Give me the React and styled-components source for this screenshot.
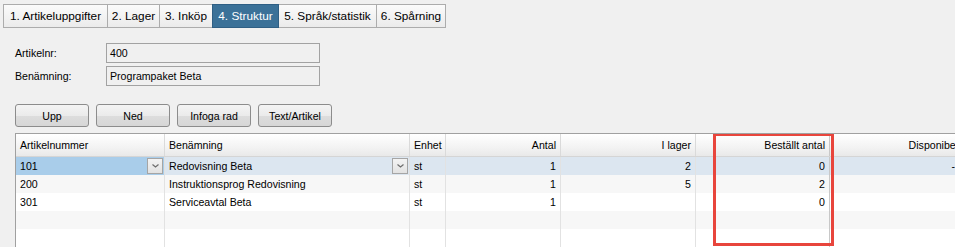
import React from 'react';
import styled, { createGlobalStyle } from 'styled-components';

const GlobalStyle = createGlobalStyle`
  html, body {
    margin: 0;
    padding: 0;
    background: #f0f0f0;
    overflow: hidden;
  }
  body {
    font-family: "Liberation Sans", Arial, sans-serif;
    font-size: 10.6px;
    color: #000;
  }
`;

const Page = styled.div`
  width: 955px;
  height: 247px;
  overflow: hidden;
  background: #f0f0f0;
`;

// Tab strip
const TabStrip = styled.div`
  display: flex;
  padding: 4px 0 0 3px;
  height: 24px;
`;

const Tab = styled.div`
  width: ${p => p.$width}px;
  height: 24px;
  box-sizing: border-box;
  display: flex;
  align-items: center;
  justify-content: center;
  padding: 0 0 1px;
  margin-left: -1px;
  border: 1px solid ${p => (p.$active ? '#2f5f84' : '#acacac')};
  background: ${p => (p.$active ? '#3b7198' : 'linear-gradient(#fbfbfb, #ebebeb)')};
  color: ${p => (p.$active ? '#fff' : '#000')};
  font-size: 11.8px;
  white-space: nowrap;
  position: relative;
  z-index: ${p => (p.$active ? 1 : 0)};

  &:first-child {
    margin-left: 0;
  }
`;

// Header fields
const Fields = styled.div`
  display: grid;
  grid-template-columns: 91px 214px;
  row-gap: 3px;
  padding: 15px 0 0 15px;
  align-items: center;
`;

const Label = styled.label`
  padding-bottom: 1px;
`;

const Field = styled.div`
  height: 20px;
  box-sizing: border-box;
  border: 1px solid #a2a2a2;
  background: #f0f0f0;
  padding: 0 3px;
  display: flex;
  align-items: center;
`;

// Buttons
const ButtonRow = styled.div`
  display: flex;
  gap: 7px;
  padding: 18px 0 0 15px;
`;

const Button = styled.button`
  width: 74px;
  height: 23px;
  box-sizing: border-box;
  border: 1px solid #8c8c8c;
  border-radius: 3px;
  background: linear-gradient(#f4f4f4 0%, #ebebeb 50%, #dddddd 51%, #d6d6d6 100%);
  font-family: inherit;
  font-size: 10.6px;
  color: #000;
  padding: 0;
`;

// Grid
const GridWrap = styled.div`
  position: relative;
  margin: 6px 0 0 15px;
  border-top: 1px solid #a0a0a0;
  border-left: 1px solid #a0a0a0;
  background: #fff;
  height: 114px;
  overflow: hidden;
`;

const columns = [
  { key: 'nr', title: 'Artikelnummer', width: 149, align: 'left' },
  { key: 'name', title: 'Benämning', width: 245, align: 'left' },
  { key: 'unit', title: 'Enhet', width: 36, align: 'left' },
  { key: 'qty', title: 'Antal', width: 115, align: 'right' },
  { key: 'stock', title: 'I lager', width: 135, align: 'right' },
  { key: 'ordered', title: 'Beställt antal', width: 134, align: 'right', strong: true },
  { key: 'avail', title: 'Disponibelt', width: 136, align: 'right' },
  { key: 'extra', title: '', width: 120, align: 'left' },
];

const template = columns.map(c => `${c.width}px`).join(' ');

const Row = styled.div`
  display: grid;
  grid-template-columns: ${template};
  height: ${p => (p.$header ? '23px' : '18px')};
  background: ${p =>
    p.$header
      ? 'linear-gradient(#ffffff, #f3f3f3 60%, #e9e9e9)'
      : p.$selected
      ? '#dce6f0'
      : p.$alt
      ? '#f7f7f7'
      : '#ffffff'};
  border-bottom: ${p => (p.$header ? '1px solid #d5d5d5' : 'none')};
  box-sizing: border-box;
`;

const Cell = styled.div`
  position: relative;
  box-sizing: border-box;
  display: flex;
  align-items: center;
  justify-content: ${p => (p.$align === 'right' ? 'flex-end' : 'flex-start')};
  padding: 0 4px 1px;
  border-right: 1px solid ${p => (p.$strong ? '#c8c8c8' : '#e2e2e2')};
  background: ${p => (p.$current ? '#a9cdea' : 'transparent')};
  white-space: nowrap;
  overflow: hidden;
`;

const HeaderCell = styled(Cell)`
  padding-top: 1px;
  border-right-color: ${p => (p.$strong ? '#c8c8c8' : '#dadada')};
`;

const DropButton = styled.span`
  position: absolute;
  right: 1px;
  top: 1px;
  width: 16px;
  height: 16px;
  box-sizing: border-box;
  border: 1px solid #a5a5a5;
  background: linear-gradient(#f3f3f3, #e2e2e2);
  display: flex;
  align-items: center;
  justify-content: center;
`;

const Highlight = styled.div`
  position: absolute;
  left: 697px;
  top: -1px;
  width: 121px;
  height: 113px;
  box-sizing: border-box;
  border: 3px solid #e8453c;
  pointer-events: none;
`;

const Chevron = () => (
  <svg width="7" height="4" viewBox="0 0 7 4">
    <path d="M0.5 0.5 L3.5 3 L6.5 0.5" fill="none" stroke="#6d6d6d" strokeWidth="1.2" />
  </svg>
);

const rows = [
  { nr: '101', name: 'Redovisning Beta', unit: 'st', qty: '1', stock: '2', ordered: '0', avail: '-1' },
  { nr: '200', name: 'Instruktionsprog Redovisning', unit: 'st', qty: '1', stock: '5', ordered: '2', avail: '' },
  { nr: '301', name: 'Serviceavtal Beta', unit: 'st', qty: '1', stock: '', ordered: '0', avail: '' },
  {},
  {},
];

const tabs = [
  { label: '1. Artikeluppgifter', width: 105 },
  { label: '2. Lager', width: 53 },
  { label: '3. Inköp', width: 54 },
  { label: '4. Struktur', width: 67, active: true },
  { label: '5. Språk/statistik', width: 99 },
  { label: '6. Spårning', width: 70 },
];

export default function App() {
  return (
    <Page>
      <GlobalStyle />
      <TabStrip>
        {tabs.map(t => (
          <Tab key={t.label} $width={t.width} $active={t.active}>{t.label}</Tab>
        ))}
      </TabStrip>

      <Fields>
        <Label>Artikelnr:</Label>
        <Field>400</Field>
        <Label>Benämning:</Label>
        <Field>Programpaket Beta</Field>
      </Fields>

      <ButtonRow>
        <Button>Upp</Button>
        <Button>Ned</Button>
        <Button>Infoga rad</Button>
        <Button>Text/Artikel</Button>
      </ButtonRow>

      <GridWrap>
        <Row $header>
          {columns.map(c => (
            <HeaderCell key={c.key} $align={c.align} $strong={c.strong}>{c.title}</HeaderCell>
          ))}
        </Row>
        {rows.map((r, i) => (
          <Row key={i} $selected={i === 0} $alt={i % 2 === 1}>
            {columns.map(c => (
              <Cell key={c.key} $align={c.align} $strong={c.strong} $current={i === 0 && c.key === 'nr'}>
                {r[c.key]}
                {i === 0 && (c.key === 'nr' || c.key === 'name') && (
                  <DropButton><Chevron /></DropButton>
                )}
              </Cell>
            ))}
          </Row>
        ))}
        <Highlight />
      </GridWrap>
    </Page>
  );
}
